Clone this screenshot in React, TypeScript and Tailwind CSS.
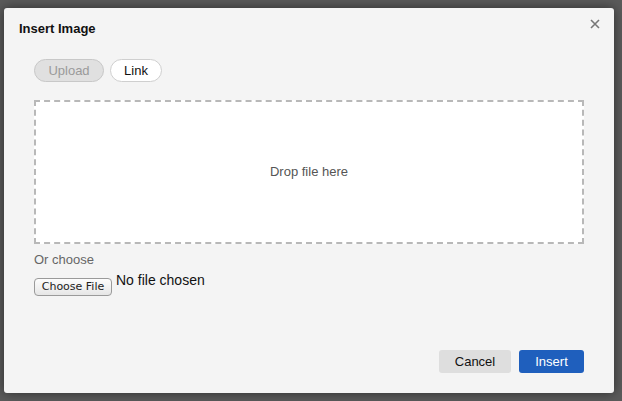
export default function App() {
  return (
    <div
      className="w-[622px] h-[401px] bg-[#5b5b5b] pt-[8px] pl-[4px] overflow-hidden"
      style={{ fontFamily: '"Liberation Sans", Arial, sans-serif' }}
    >
      <div className="relative w-[610px] h-[385px] bg-[#f4f4f4] rounded-[3px] shadow-[0_0_12px_rgba(0,0,0,0.5)] flex flex-col">
        <div className="h-[40px] pl-[15px] pt-[13px] text-[13px] font-bold text-[#111] leading-[16px]">Insert Image</div>
        <button className="absolute right-[14px] top-[11px] w-[10px] h-[10px] text-[#777]">
          <svg viewBox="0 0 10 10" width="10" height="10" className="block">
            <path d="M1 1 L9 9 M9 1 L1 9" stroke="currentColor" strokeWidth="1.6" />
          </svg>
        </button>
        <div className="px-[30px]">
          <div className="flex gap-[6px] mt-[11px]">
            <button className="w-[70px] h-[23px] rounded-full bg-[#e0e0e0] border border-[#c8c8c8] text-[13px] text-[#9a9a9a]">
              Upload
            </button>
            <button className="w-[52px] h-[23px] rounded-full bg-white border border-[#cfcfcf] text-[13px] text-[#111]">
              Link
            </button>
          </div>
          <div className="mt-[18px] w-[550px] h-[144px] bg-white border-2 border-dashed border-[#b8b8b8] flex items-center justify-center text-[13px] text-[#555]">
            Drop file here
          </div>
          <div className="mt-[8px] text-[13px] text-[#666] leading-[15px]">Or choose</div>
          <div className="mt-[4px] flex items-start gap-[4px]">
            <button
              className="mt-[7px] w-[78px] h-[18px] rounded-[4px] border border-[#9a9a9a] bg-gradient-to-b from-[#fdfdfd] to-[#e6e6e6] text-[11px] text-[#222] leading-[16px]"
              style={{ fontFamily: '"DejaVu Sans", sans-serif' }}
            >
              Choose File
            </button>
            <span className="text-[14px] text-[#111] leading-[16px] mt-[1px]">No file chosen</span>
          </div>
        </div>
        <div className="mt-auto mb-[20px] mr-[30px] flex justify-end gap-[8px]">
          <button className="w-[72px] h-[23px] rounded-[3px] bg-[#dedede] text-[13px] text-[#111]">Cancel</button>
          <button className="w-[65px] h-[23px] rounded-[3px] bg-[#1f5fbd] text-[13px] text-white">Insert</button>
        </div>
      </div>
    </div>
  )
}
